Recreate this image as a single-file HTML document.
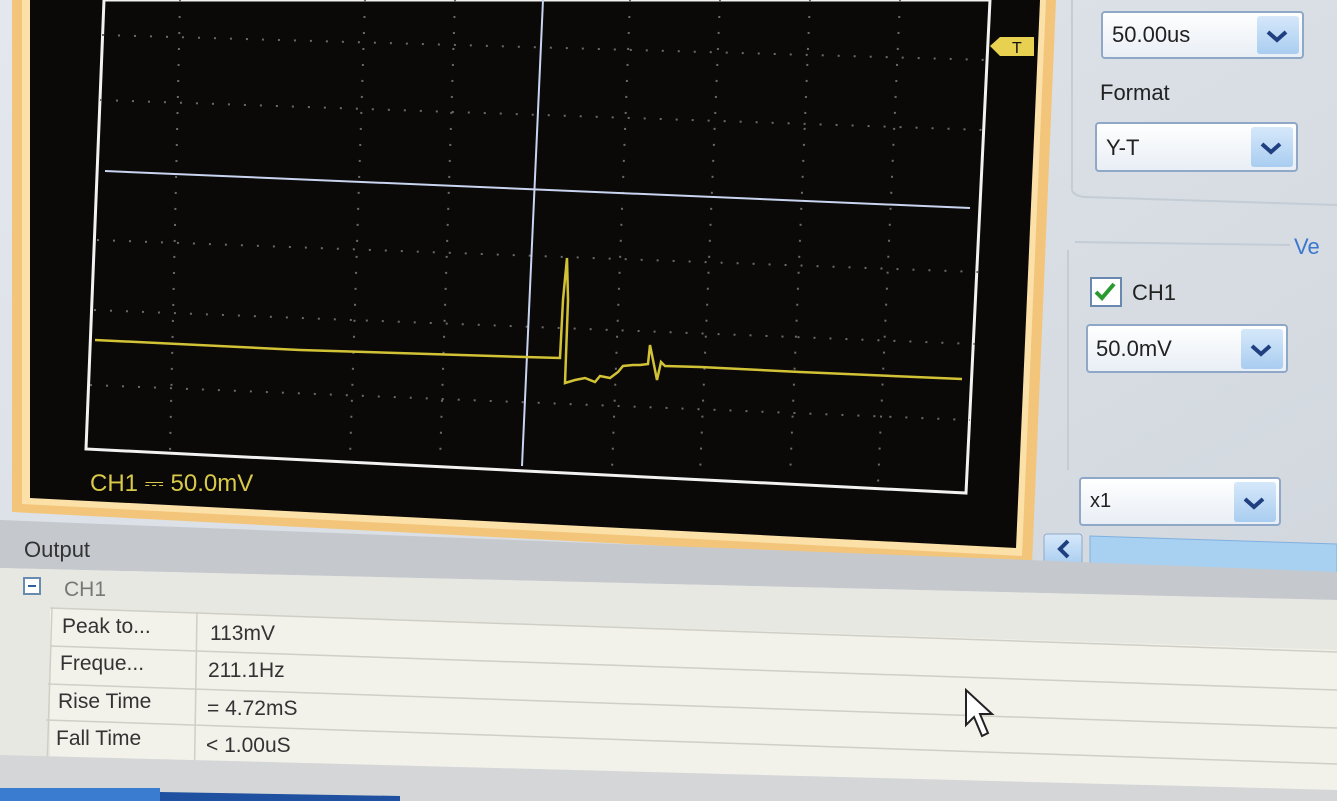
<!DOCTYPE html>
<html><head><meta charset="utf-8"><style>
html,body{margin:0;padding:0;width:1337px;height:801px;overflow:hidden;background:#dde2e8}
svg{display:block}
text{font-family:"Liberation Sans",sans-serif}
</style></head><body>
<svg width="1337" height="801" viewBox="0 0 1337 801">
<defs>
<linearGradient id="bg" x1="0" y1="0" x2="1" y2="1"><stop offset="0" stop-color="#e4e8ee"/><stop offset="1" stop-color="#cfd5dc"/></linearGradient>
<linearGradient id="cb" x1="0" y1="0" x2="0" y2="1"><stop offset="0" stop-color="#ffffff"/><stop offset="1" stop-color="#e8eef5"/></linearGradient>
<linearGradient id="btn" x1="0" y1="0" x2="0" y2="1"><stop offset="0" stop-color="#d6e8fa"/><stop offset="1" stop-color="#a9cdf0"/></linearGradient>
</defs>
<rect width="1337" height="801" fill="url(#bg)"/>
<!-- frame -->
<polygon points="12,0 1056,0 1032,565 12,512" fill="#f3c57a"/>
<polygon points="22,0 1046,0 1022,556 22,504" fill="#fbe0a8"/>
<polygon points="30,0 1040,0 1016,548 30,498" fill="#0b0907"/>
<!-- plot -->
<polygon points="104,0 990,0 966,493 86,449" fill="none" stroke="#f2f2f2" stroke-width="3"/>
<g stroke="#6a6a6a" stroke-width="2" stroke-dasharray="2,14" fill="none">
<line x1="102" y1="35" x2="988" y2="60"/>
<line x1="100" y1="100" x2="985" y2="130"/>
<line x1="97" y1="240" x2="978" y2="272"/>
<line x1="94" y1="310" x2="975" y2="344"/>
<line x1="90" y1="385" x2="970" y2="420"/>
<line x1="180" y1="0" x2="170" y2="452"/>
<line x1="365" y1="0" x2="350" y2="458"/>
<line x1="455" y1="0" x2="440" y2="462"/>
<line x1="630" y1="0" x2="612" y2="470"/>
<line x1="720" y1="0" x2="700" y2="474"/>
<line x1="810" y1="0" x2="790" y2="478"/>
<line x1="900" y1="0" x2="878" y2="484"/>
</g>
<g stroke="#c8d4f0" stroke-width="2" fill="none">
<line x1="543" y1="0" x2="522" y2="466"/>
<line x1="105" y1="171" x2="970" y2="208"/>
</g>
<!-- trigger marker -->
<polygon points="990,46 1000,37 1034,37 1034,56 1000,56" fill="#e8d050"/>
<text x="1012" y="53" font-size="16" fill="#111">T</text>
<!-- trace -->
<polyline fill="none" stroke="#d2c236" stroke-width="2.5" points="95,340 300,350 525,357 560,358 563,300 567,258 568,300 565,383 575,380 585,378 595,382 600,376 610,378 618,372 623,366 633,365 640,365 648,364 650,345 653,360 657,380 661,362 665,366 700,367 800,372 962,379"/>
<text x="90" y="491" font-size="24" fill="#d8ca48">CH1 ⎓  50.0mV</text>
<!-- right panel -->
<rect x="1102" y="12" width="201" height="46" rx="3" fill="url(#cb)" stroke="#8fa8c8" stroke-width="2"/>
<text x="1112" y="42" font-size="22" fill="#222">50.00us</text>
<rect x="1257" y="16" width="42" height="38" rx="3" fill="url(#btn)"/>
<path d="M1268,32 l9,8 l9,-8" stroke="#1f3f80" stroke-width="4" fill="none"/>
<text x="1100" y="100" font-size="22" fill="#222">Format</text>
<rect x="1096" y="123" width="201" height="48" rx="3" fill="url(#cb)" stroke="#8fa8c8" stroke-width="2"/>
<text x="1106" y="155" font-size="22" fill="#222">Y-T</text>
<rect x="1251" y="127" width="42" height="40" rx="3" fill="url(#btn)"/>
<path d="M1262,144 l9,8 l9,-8" stroke="#1f3f80" stroke-width="4" fill="none"/>
<path d="M1072,0 L1072,190 Q1074,196 1085,197 L1337,205" stroke="#c4ccd6" stroke-width="2" fill="none"/>
<path d="M1068,250 L1068,470 M1075,242 L1290,245" stroke="#c4ccd6" stroke-width="2" fill="none"/>
<text x="1294" y="254" font-size="22" fill="#3a78d0">Ve</text>
<rect x="1091" y="278" width="30" height="28" fill="#fff" stroke="#6888b0" stroke-width="2"/>
<path d="M1096,292 l6,6 l12,-14" stroke="#2a9a30" stroke-width="4" fill="none"/>
<text x="1132" y="300" font-size="22" fill="#222">CH1</text>
<rect x="1087" y="325" width="200" height="47" rx="3" fill="url(#cb)" stroke="#8fa8c8" stroke-width="2"/>
<text x="1096" y="356" font-size="22" fill="#222">50.0mV</text>
<rect x="1241" y="329" width="42" height="40" rx="3" fill="url(#btn)"/>
<path d="M1252,346 l9,8 l9,-8" stroke="#1f3f80" stroke-width="4" fill="none"/>
<rect x="1080" y="478" width="200" height="47" rx="3" fill="url(#cb)" stroke="#8fa8c8" stroke-width="2"/>
<text x="1090" y="507" font-size="20" fill="#222">x1</text>
<rect x="1234" y="482" width="42" height="40" rx="3" fill="url(#btn)"/>
<path d="M1245,499 l9,8 l9,-8" stroke="#1f3f80" stroke-width="4" fill="none"/>
<rect x="1044" y="534" width="38" height="32" rx="3" fill="url(#btn)" stroke="#8fa8c8"/>
<path d="M1068,541 l-8,8 l8,8" stroke="#1f3f80" stroke-width="4" fill="none"/>
<polygon points="1090,536 1337,544 1337,578 1090,570" fill="#a8d0f0" stroke="#80b0e0"/>
<!-- output bar -->
<polygon points="0,520 1337,572 1337,600 0,568" fill="#c5c9ce"/>
<text x="24" y="557" font-size="22" fill="#333">Output</text>
<polygon points="0,568 1337,600 1337,801 0,801" fill="#e8e8e2"/>
<polygon points="50,608 1337,650 1337,801 50,801" fill="#f2f1ea"/>
<rect x="24" y="578" width="16" height="16" fill="#fff" stroke="#6a8ab0" stroke-width="2"/>
<line x1="28" y1="586" x2="36" y2="586" stroke="#3060a0" stroke-width="2"/>
<text x="64" y="596" font-size="21" fill="#777">CH1</text>
<g stroke="#cfcfc6" stroke-width="1.5">
<line x1="50" y1="608" x2="1337" y2="652"/>
<line x1="50" y1="646" x2="1337" y2="690"/>
<line x1="48" y1="684" x2="1337" y2="728"/>
<line x1="46" y1="720" x2="1337" y2="764"/>
<line x1="197" y1="612" x2="194" y2="801"/>
<line x1="52" y1="608" x2="46" y2="801"/>
</g>
<g font-size="21" fill="#333">
<text x="62" y="633">Peak to...</text><text x="210" y="640">113mV</text>
<text x="60" y="670">Freque...</text><text x="208" y="677">211.1Hz</text>
<text x="58" y="708">Rise Time</text><text x="207" y="715">= 4.72mS</text>
<text x="56" y="745">Fall Time</text><text x="206" y="752">&lt; 1.00uS</text>
</g>
<polygon points="0,755 1337,790 1337,801 0,801" fill="#d4d6d8"/>
<rect x="0" y="788" width="160" height="13" fill="#3a7cd0"/>
<polygon points="160,792 400,796 400,801 160,801" fill="#2050a0"/>
<!-- cursor -->
<path d="M966,690 L966,725 L974,717 L982,736 L988,733 L980,714 L992,714 Z" fill="#fff" stroke="#222" stroke-width="2"/>
</svg>
</body></html>
